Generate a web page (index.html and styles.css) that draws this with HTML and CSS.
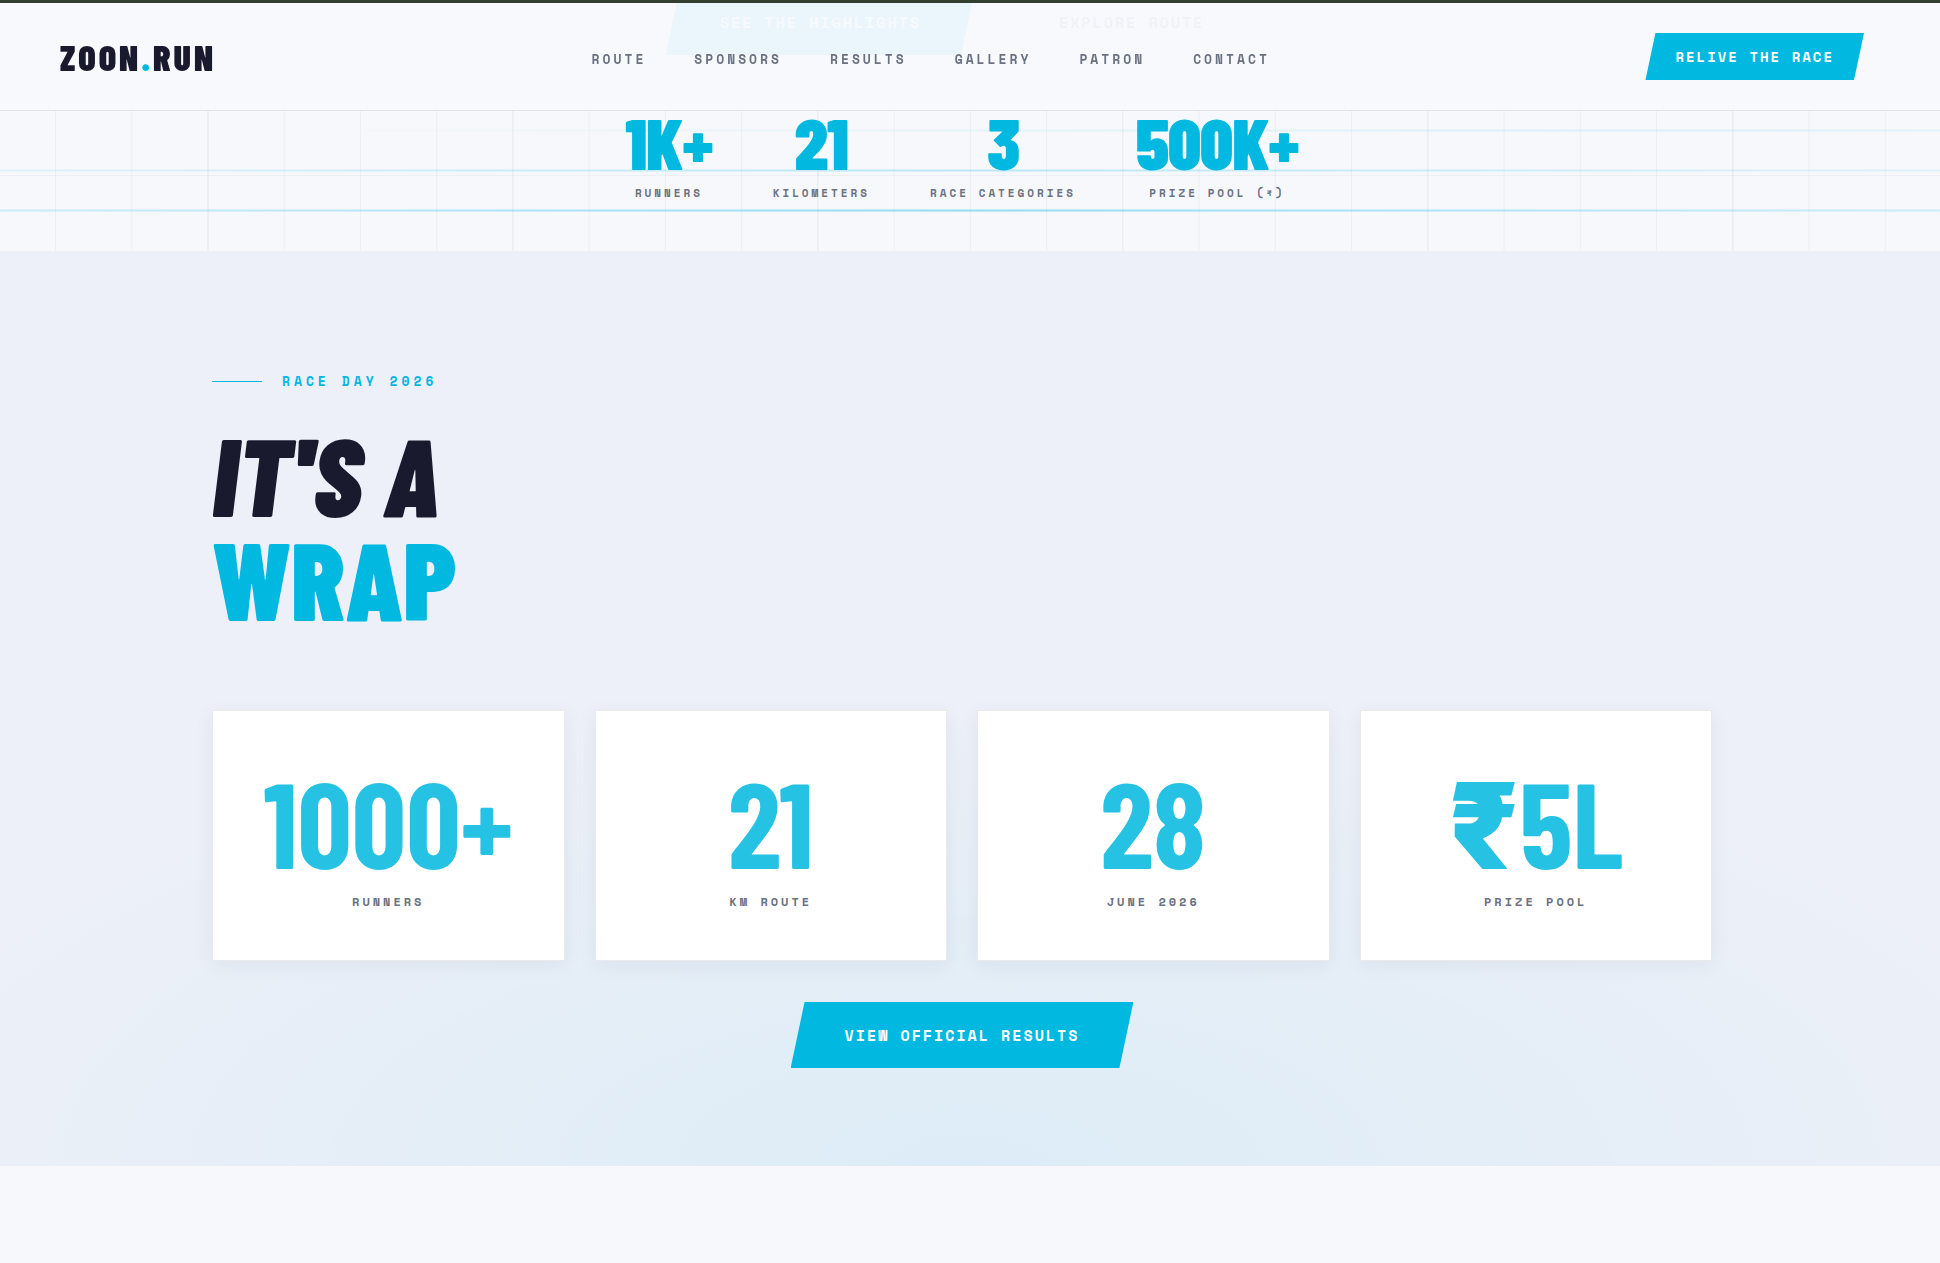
FILE: index.html
```html
<!DOCTYPE html>
<html lang="en">
<head>
<meta charset="utf-8">
<meta name="viewport" content="width=device-width, initial-scale=1">
<title>ZOON.RUN</title>
<link rel="stylesheet" href="styles.css">
</head>
<body>
<header class="site-header">
  <a class="logo" href="#top">ZOON<span class="accent">.</span>RUN</a>
  <nav class="site-nav" aria-label="Main">
    <a href="#route">ROUTE</a>
    <a href="#sponsors">SPONSORS</a>
    <a href="#results">RESULTS</a>
    <a href="#gallery">GALLERY</a>
    <a href="#patron">PATRON</a>
    <a href="#contact">CONTACT</a>
  </nav>
  <a class="btn btn-small" href="#race">RELIVE THE RACE</a>
</header>
<main>
  <section class="hero" id="top">
    <svg class="track" viewBox="0 0 1940 251" preserveAspectRatio="none" aria-hidden="true">
      <defs>
        <pattern id="minor" x="55" width="76.24" height="251" patternUnits="userSpaceOnUse"><path d="M.5 0V251" stroke="#1a1a2e" stroke-opacity=".045"/></pattern>
        <pattern id="major" x="207" width="304.96" height="251" patternUnits="userSpaceOnUse"><path d="M1 0V251" stroke="#1a1a2e" stroke-opacity=".02" stroke-width="2"/></pattern>
        <linearGradient id="laneA"><stop offset=".1" stop-color="#00b8e0" stop-opacity="0"/><stop offset=".8" stop-color="#00b8e0" stop-opacity=".06"/><stop offset="1" stop-color="#00b8e0" stop-opacity=".05"/></linearGradient>
        <linearGradient id="laneB"><stop offset="0" stop-color="#00b8e0" stop-opacity=".05"/><stop offset=".5" stop-color="#00b8e0" stop-opacity=".13"/><stop offset="1" stop-color="#00b8e0" stop-opacity=".05"/></linearGradient>
        <linearGradient id="laneC"><stop offset="0" stop-color="#00b8e0" stop-opacity=".09"/><stop offset=".5" stop-color="#00b8e0" stop-opacity=".22"/><stop offset="1" stop-color="#00b8e0" stop-opacity=".09"/></linearGradient>
      </defs>
      <rect width="1940" height="251" fill="url(#minor)"/>
      <rect width="1940" height="251" fill="url(#major)"/>
      <path d="M0 22.5H1940M0 175.5H1940" stroke="#1a1a2e" stroke-opacity=".04"/>
      <g fill="url(#laneA)"><rect y="129" width="1940" height="3"/><rect y="130" width="1940" height="1"/></g>
      <g fill="url(#laneB)"><rect y="169" width="1940" height="3"/><rect y="170" width="1940" height="1"/></g>
      <g fill="url(#laneC)"><rect y="209" width="1940" height="3"/><rect y="210" width="1940" height="1"/></g>
    </svg>
    <div class="hero-actions">
      <a class="btn" href="#highlights">SEE THE HIGHLIGHTS</a>
      <a class="link-btn" href="#route">EXPLORE ROUTE</a>
    </div>
    <dl class="hero-stats">
      <div><dd>1K+</dd><dt>RUNNERS</dt></div>
      <div><dd>21</dd><dt>KILOMETERS</dt></div>
      <div><dd>3</dd><dt>RACE CATEGORIES</dt></div>
      <div><dd>500K+</dd><dt>PRIZE POOL (₹)</dt></div>
    </dl>
  </section>
  <section class="wrap-up" id="race">
    <div class="container">
      <p class="eyebrow">RACE DAY 2026</p>
      <h2 class="title"><em>IT'S A</em><span class="accent">WRAP</span></h2>
      <dl class="cards">
        <div class="card"><dd>1000+</dd><dt>RUNNERS</dt></div>
        <div class="card"><dd>21</dd><dt>KM ROUTE</dt></div>
        <div class="card"><dd>28</dd><dt>JUNE 2026</dt></div>
        <div class="card"><dd><span class="currency">₹</span>5L</dd><dt>PRIZE POOL</dt></div>
      </dl>
      <a class="btn" href="#results">VIEW OFFICIAL RESULTS</a>
    </div>
  </section>
</main>
</body>
</html>
```
FILE: styles.css
```css
:root {
  --cyan: #00b8e0;
  --ink: #1a1a2e;
  --muted: #6b7280;
  --paper: #f7f8fc;
  --mist: #edf0f8;
  --gutter: 16px;
  --display: "Barlow Condensed", Inter, sans-serif;
  --mono: "Space Mono", "Liberation Mono", monospace;
}
* { box-sizing: border-box; margin: 0; }
body {
  min-height: 100vh;
  background: var(--paper);
  color: var(--ink);
  font-family: var(--mono);
  font-weight: 700;
  overflow-x: hidden;
}
a { color: inherit; text-decoration: none; }
.accent { color: var(--cyan); }

.site-header {
  position: fixed;
  inset: 0 0 auto 0;
  z-index: 10;
  display: flex;
  align-items: center;
  justify-content: space-between;
  height: 111px;
  padding: 0 calc(60px + var(--gutter)) 0 60px;
  border-top: 3px solid #334030;
  border-bottom: 1px solid #e1e3e8;
  background: rgba(248, 249, 253, .95);
}
.logo {
  font: 900 36px/40px var(--display);
  letter-spacing: 3px;
}
.site-nav {
  display: flex;
  gap: 48px;
  padding-top: 4px;
  color: var(--muted);
  font-size: 13px;
  line-height: 20px;
  letter-spacing: 3px;
}

.btn {
  --slant: 14px;
  display: inline-block;
  padding: 0 54px;
  background: var(--cyan);
  color: #fff;
  font-size: 15px;
  line-height: 66px;
  letter-spacing: 2px;
  clip-path: polygon(var(--slant) 0, 100% 0, calc(100% - var(--slant)) 100%, 0 100%);
}
.btn-small {
  --slant: 10px;
  padding: 0 30px;
  font-size: 14px;
  line-height: 47px;
}

.hero {
  position: relative;
  padding: 0 var(--gutter) 50px 0;
  overflow: hidden;
}
.track { position: absolute; inset: 0; width: 100%; height: 100%; }
.hero-actions {
  position: relative;
  display: flex;
  justify-content: center;
  gap: 30px;
  margin-top: -11px;
}
.link-btn {
  padding: 0 54px;
  color: var(--muted);
  font-size: 15px;
  line-height: 66px;
  letter-spacing: 2px;
}
.hero-stats {
  position: relative;
  display: flex;
  justify-content: center;
  gap: 60px;
  padding-top: 50px;
  text-align: center;
}
.hero-stats dd {
  color: var(--cyan);
  font: 900 72px/72px var(--display);
  letter-spacing: -1px;
}
.hero-stats div, .card { display: flex; flex-direction: column; }
.hero-stats dt, .card dt { color: var(--muted); letter-spacing: 3px; }
.hero-stats dt { margin-top: 8px; font-size: 11px; line-height: 16px; }

.wrap-up {
  padding: 120px var(--gutter) 98px 0;
  background: radial-gradient(ellipse 60% 50% at 50% 100%, rgba(0, 184, 224, .07), transparent) var(--mist);
}
.container { max-width: 1500px; margin: 0 auto; text-align: center; }
.eyebrow {
  display: flex;
  align-items: center;
  gap: 20px;
  color: var(--cyan);
  font-size: 13px;
  line-height: 20px;
  letter-spacing: 4px;
}
.eyebrow::before { content: ""; width: 50px; height: 1px; background: var(--cyan); }
.title {
  margin: 30px 0 81px;
  font: 900 110px/104px var(--display);
  text-align: left;
}
.title em, .title span { display: block; }
.cards {
  display: grid;
  grid-template-columns: repeat(4, 1fr);
  gap: 30px;
  margin-bottom: 41px;
}
.card {
  padding: 50px 20px;
  border: 1px solid #e8eaee;
  background: #fff;
  box-shadow: 0 4px 20px rgba(26, 26, 46, .06);
}
.card dd {
  color: var(--cyan);
  font: 700 120px/120px var(--display);
  opacity: .85;
}
.currency { font-weight: 900; }
.card dt { margin-top: 13px; font-size: 12px; line-height: 16px; }
```
